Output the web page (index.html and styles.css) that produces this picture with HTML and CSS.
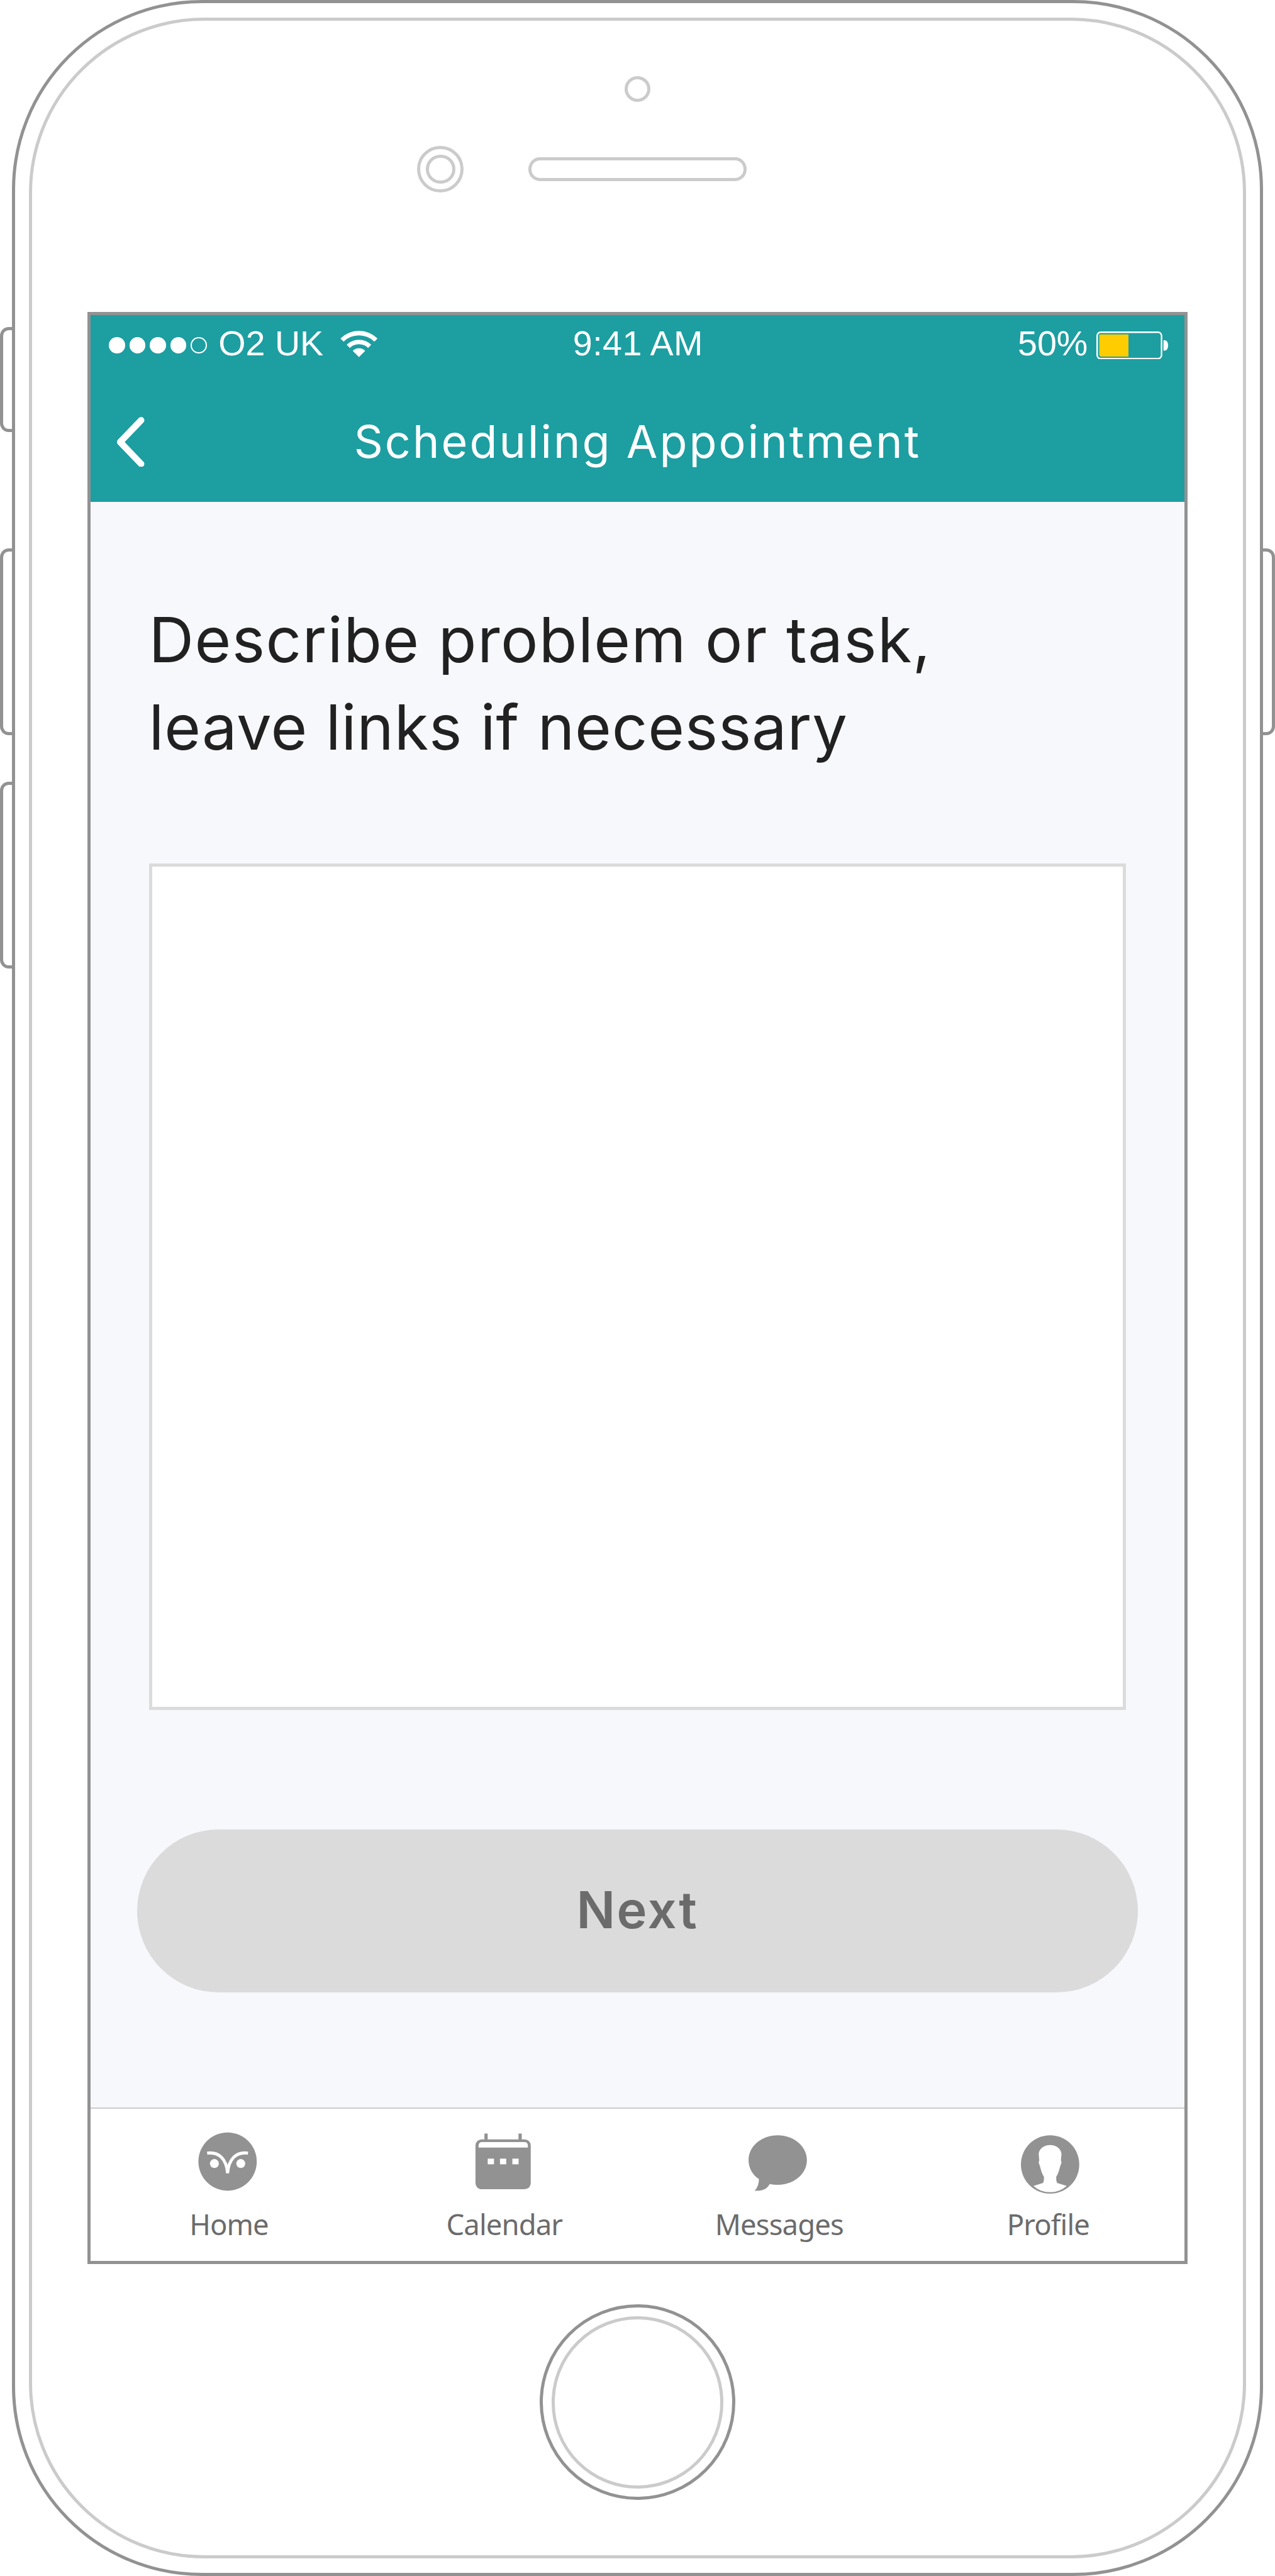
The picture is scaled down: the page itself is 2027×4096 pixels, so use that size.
FILE: index.html
```html
<!DOCTYPE html>
<html lang="en">
<head>
<meta charset="utf-8">
<title>Scheduling Appointment</title>
<link rel="stylesheet" href="styles.css">
</head>
<body>
<div class="rail">
  <span class="key key-mute"></span>
  <span class="key key-up"></span>
  <span class="key key-down"></span>
</div>
<div class="phone">
  <div class="bezel">
    <div class="sensor"></div>
    <div class="earpiece">
      <div class="camera"><div class="lens"></div></div>
      <div class="speaker"></div>
    </div>
    <div class="screen">
      <header class="header">
        <div class="status">
          <div class="status-left">
            <div class="signal"><i></i><i></i><i></i><i></i><i class="empty"></i></div>
            <span class="label carrier">O2 UK</span>
            <svg class="wifi" viewBox="0 0 65 45"><path d="M.2 13.2A45 45 0 0 1 63.8 13.2L58.4 18.6A37.4 37.4 0 0 0 5.6 18.6ZM11 24A29.8 29.8 0 0 1 53 24L47.6 29.4A22.2 22.2 0 0 0 16.4 29.4ZM21.4 34.4A15 15 0 0 1 42.6 34.4L32 45Z"/></svg>
          </div>
          <span class="label time">9:41 AM</span>
          <div class="status-right">
            <span class="label">50%</span>
            <svg class="battery" viewBox="0 0 124 48"><rect x="1.3" y="1.3" width="110.4" height="45.4" rx="6" fill="none" stroke="#fff" stroke-width="2.6"/><path d="M5 5H55V43H8Q5 43 5 40Z" fill="#ffcc00"/><path d="M115 15H118Q123 17 123 24Q123 31 118 33H115Z" fill="#fff"/></svg>
          </div>
        </div>
        <div class="nav">
          <svg class="back" viewBox="0 0 50 86"><path d="M42.5 5.5L6.5 43L42.5 80.5"/></svg>
          <h1>Scheduling Appointment</h1>
        </div>
      </header>
      <main class="content">
        <p class="prompt"><span class="line-first">Describe problem or task,</span> <span class="line-second">leave links if necessary</span></p>
        <textarea class="answer" aria-label="Description"></textarea>
        <button class="next">Next</button>
      </main>
      <nav class="tabs">
        <a class="tab">
          <svg viewBox="0 0 120 120"><circle cx="58" cy="55" r="50"/><g class="cut"><circle cx="35.4" cy="58.4" r="7.6"/><circle cx="80.6" cy="58.4" r="7.6"/></g><path class="brow" d="M23 40.5C43 38 56 50 58 75C60 50 73 38 93 40.5"/></svg>
          <span>Home</span>
        </a>
        <a class="tab">
          <svg viewBox="0 0 120 120"><rect x="26" y="7" width="5.6" height="12"/><rect x="84.4" y="7" width="5.6" height="12"/><rect x="10.700" y="17" width="94.700" height="85.500" rx="10.500"/><g class="cut"><path d="M16 31v-4a5.500 5.500 0 0 1 5.500-5.500h73.500a5.500 5.500 0 0 1 5.500 5.500v4z"/><rect x="31.700" y="50" width="10.700" height="9.700"/><rect x="52.700" y="50" width="10.700" height="9.700"/><rect x="73.900" y="50" width="10.700" height="9.700"/></g></svg>
          <span>Calendar</span>
        </a>
        <a class="tab">
          <svg viewBox="0 0 120 120"><path d="M57.600 10C85.500 10 107.600 29 107.600 52.500S85.500 95 57.600 95Q50 95 43.800 93.500C40 101 33 106 18 105Q25.500 97 25.400 85C14.500 78 7.600 66 7.600 52.500C7.600 29 29.700 10 57.600 10Z"/></svg>
          <span>Messages</span>
        </a>
        <a class="tab">
          <svg viewBox="0 0 120 120"><circle cx="63" cy="60" r="50"/><path class="cut" d="M63 26.700C53 26.700 43.500 33 43.500 42.500L44.500 53Q43 55 43.700 58C46.500 63 47 73 52.500 81Q53 87 51 91.700L34.500 96.700Q46 107.500 63 107.500T91.500 96.700L75 91.700Q73 87 73.500 81C79 73 79.500 63 82.300 58Q83 55 81.500 53L82.500 42.500C82.500 33 73 26.700 63 26.700Z"/></svg>
          <span>Profile</span>
        </a>
      </nav>
    </div>
    <div class="home"><div class="home-inner"></div></div>
  </div>
</div>
<div class="rail rail-right">
  <span class="key key-power"></span>
</div>
</body>
</html>
```
FILE: styles.css
```css
:root {
  --u: 4.6386px;
  --line: 5px;
  --dark: #929292;
  --light: #cbcbcb;
}

* {
  box-sizing: border-box;
}

body {
  margin: 0;
  width: 2027px;
  height: 4096px;
  overflow: hidden;
  display: grid;
  grid-template-columns: calc(4 * var(--u)) 1fr calc(4 * var(--u));
  background: #fff;
  font-family: Inter, "Liberation Sans", sans-serif;
}

.rail {
  display: flex;
  flex-direction: column;
  padding-top: calc(112 * var(--u));
}

.rail-right {
  padding-top: calc(188 * var(--u));
}

.key {
  border: var(--line) solid var(--dark);
  border-right: 0;
  border-radius: calc(3 * var(--u)) 0 0 calc(3 * var(--u));
  height: calc(64 * var(--u));
}

.key-mute {
  height: calc(36 * var(--u));
}

.key-up {
  margin-top: calc(40 * var(--u));
}

.key-down {
  margin-top: calc(16 * var(--u));
}

.key-power {
  border: var(--line) solid var(--dark);
  border-left: 0;
  border-radius: 0 calc(3 * var(--u)) calc(3 * var(--u)) 0;
}

.phone {
  height: 4096px;
  border: var(--line) solid var(--dark);
  border-radius: calc(65 * var(--u));
  padding: calc(6 * var(--u) - var(--line));
}

.bezel {
  height: 100%;
  border: var(--line) solid var(--light);
  border-radius: calc(60 * var(--u));
  display: flex;
  flex-direction: column;
  align-items: center;
  padding-top: calc(20 * var(--u) - var(--line));
}

.sensor,
.camera,
.lens,
.speaker {
  flex: none;
  border: var(--line) solid var(--light);
  border-radius: 50%;
}

.sensor {
  width: calc(9 * var(--u));
  height: calc(9 * var(--u));
}

.earpiece {
  width: calc(151 * var(--u));
  margin-top: calc(15 * var(--u));
  display: flex;
  align-items: center;
  gap: calc(22 * var(--u));
}

.camera {
  width: calc(16 * var(--u));
  height: calc(16 * var(--u));
  display: grid;
  place-items: center;
}

.lens {
  width: calc(10 * var(--u));
  height: calc(10 * var(--u));
}

.speaker {
  width: calc(75 * var(--u));
  height: calc(8 * var(--u));
  border-radius: calc(4 * var(--u));
}

.screen {
  flex: none;
  width: calc(377 * var(--u));
  height: calc(669 * var(--u));
  margin-top: calc(41 * var(--u));
  border: var(--line) solid var(--dark);
  background: #f7f8fc;
  display: flex;
  flex-direction: column;
}

.header {
  flex: none;
  height: calc(64 * var(--u));
  background: #1d9ea1;
  color: #fff;
}

.status {
  height: calc(20 * var(--u));
  padding: calc(.5 * var(--u)) calc(5.3 * var(--u)) 0 calc(6.3 * var(--u));
  display: grid;
  grid-template-columns: 1fr auto 1fr;
  align-items: center;
  font: calc(12 * var(--u)) / calc(14 * var(--u)) "Liberation Sans", Arial, sans-serif;
}

.status-left,
.status-right {
  display: flex;
  align-items: center;
}

.status-right {
  justify-content: flex-end;
  gap: calc(3 * var(--u));
}

.label {
  padding-bottom: 4px;
}

.time {
  margin-right: 3px;
  letter-spacing: .4px;
}

.signal {
  display: flex;
  gap: calc(1.5 * var(--u));
}

.signal i {
  width: calc(5.5 * var(--u));
  height: calc(5.5 * var(--u));
  border-radius: 50%;
  background: #fff;
}

.signal .empty {
  background: none;
  border: 2px solid #fff;
}

.carrier {
  margin-left: calc(4 * var(--u));
}

.wifi {
  width: calc(13 * var(--u));
  height: calc(9 * var(--u));
  margin: 0 0 3px calc(5.7 * var(--u));
  fill: #fff;
}

.battery {
  width: calc(24.8 * var(--u));
  height: calc(9.6 * var(--u));
}

.nav {
  height: calc(44 * var(--u));
  display: grid;
  grid-template-columns: 1fr auto 1fr;
  align-items: center;
  padding: calc(2.8 * var(--u)) calc(8.8 * var(--u)) 0;
}

.back {
  width: calc(10 * var(--u));
  height: calc(17.2 * var(--u));
  fill: none;
  stroke: #fff;
  stroke-width: 11;
  stroke-linecap: round;
  stroke-linejoin: round;
}

.nav h1 {
  margin: 0;
  font-size: calc(15.5 * var(--u));
  font-weight: 400;
  line-height: calc(20 * var(--u));
  letter-spacing: 3.05px;
}

.content {
  flex: 1;
  display: flex;
  flex-direction: column;
  align-items: center;
  padding-top: calc(32.2 * var(--u));
}

.prompt {
  width: calc(335 * var(--u));
  margin: 0 0 calc(31.8 * var(--u));
  font-size: calc(21.4 * var(--u));
  line-height: calc(30 * var(--u));
  color: #212121;
}

.prompt span {
  display: block;
}

.line-first {
  letter-spacing: 1.35px;
}

.line-second {
  letter-spacing: .75px;
}

.answer {
  width: calc(335 * var(--u));
  height: calc(290 * var(--u));
  border: var(--line) solid #dbdbdb;
  border-radius: 0;
  background: #fff;
  resize: none;
  outline: 0;
}

.next {
  width: calc(343 * var(--u));
  height: calc(56 * var(--u));
  margin-top: calc(41 * var(--u));
  padding: 0 0 3px;
  border: 0;
  border-radius: calc(28 * var(--u));
  background: #dbdbdb;
  color: #6b6b6b;
  font: 600 calc(17.5 * var(--u)) / 1.2 Inter, "Liberation Sans", sans-serif;
  letter-spacing: 2.5px;
}

.tabs {
  flex: none;
  height: calc(52.4 * var(--u));
  border-top: 2px solid #cbcbcb;
  background: #fff;
  display: grid;
  grid-template-columns: calc(94.4 * var(--u)) calc(94.4 * var(--u)) calc(94 * var(--u)) 1fr;
  padding: calc(7 * var(--u)) calc(1.5 * var(--u)) 0 calc(.2 * var(--u));
}

.tab {
  display: flex;
  flex-direction: column;
  align-items: center;
  gap: calc(1.4 * var(--u));
  color: #6b6b6b;
  font: calc(9.8 * var(--u)) / calc(14 * var(--u)) "Noto Sans", "Open Sans", sans-serif;
  letter-spacing: -.9px;
}

.tab svg {
  width: calc(24 * var(--u));
  height: calc(24 * var(--u));
  fill: var(--dark);
}

.tab .cut {
  fill: #fff;
}

.tab .brow {
  fill: none;
  stroke: #fff;
  stroke-width: 5.2;
}

.home {
  flex: none;
  width: calc(67 * var(--u));
  height: calc(67 * var(--u));
  margin-top: calc(14 * var(--u));
  border: var(--line) solid var(--dark);
  border-radius: 50%;
  display: grid;
  place-items: center;
}

.home-inner {
  width: calc(59 * var(--u));
  height: calc(59 * var(--u));
  border: var(--line) solid var(--light);
  border-radius: 50%;
}
```
